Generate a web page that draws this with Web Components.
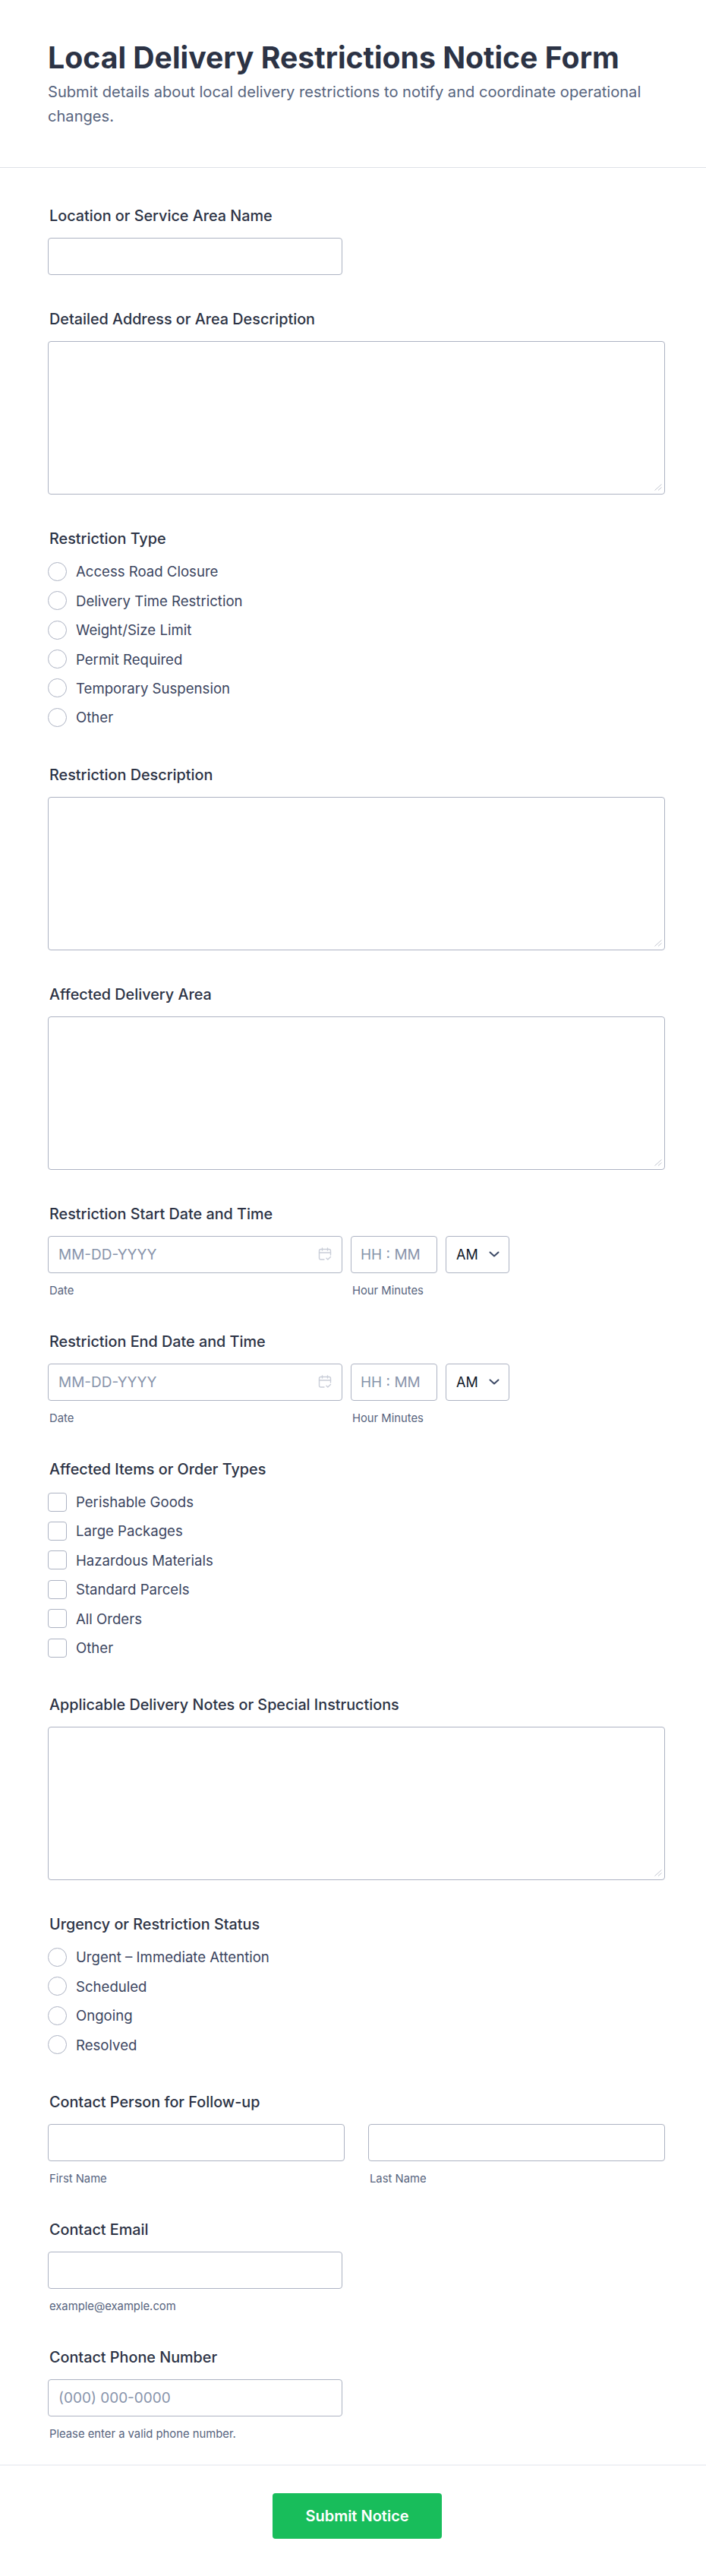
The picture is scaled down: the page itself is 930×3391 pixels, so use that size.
<!DOCTYPE html>
<html lang="en">
<head>
<meta charset="utf-8">
<title>Local Delivery Restrictions Notice Form</title>
<style>
  html, body { margin: 0; background: #fff; }
  body { font-family: Inter, "Liberation Sans", sans-serif; color: #2c3345; }
</style>
</head>
<body>

<delivery-form>
  <form-header slot="header" title="Local Delivery Restrictions Notice Form">
    Submit details about local delivery restrictions to notify and coordinate operational changes.
  </form-header>

  <form-field label="Location or Service Area Name"><text-box></text-box></form-field>
  <form-field label="Detailed Address or Area Description"><area-box></area-box></form-field>
  <form-field label="Restriction Type">
    <choice-list type="radio" items="Access Road Closure|Delivery Time Restriction|Weight/Size Limit|Permit Required|Temporary Suspension|Other"></choice-list>
  </form-field>
  <form-field label="Restriction Description"><area-box></area-box></form-field>
  <form-field label="Affected Delivery Area"><area-box></area-box></form-field>
  <form-field label="Restriction Start Date and Time"><date-time></date-time></form-field>
  <form-field label="Restriction End Date and Time"><date-time></date-time></form-field>
  <form-field label="Affected Items or Order Types">
    <choice-list type="checkbox" items="Perishable Goods|Large Packages|Hazardous Materials|Standard Parcels|All Orders|Other"></choice-list>
  </form-field>
  <form-field label="Applicable Delivery Notes or Special Instructions"><area-box></area-box></form-field>
  <form-field label="Urgency or Restriction Status">
    <choice-list type="radio" items="Urgent – Immediate Attention|Scheduled|Ongoing|Resolved"></choice-list>
  </form-field>
  <form-field label="Contact Person for Follow-up"><name-pair></name-pair></form-field>
  <form-field label="Contact Email"><text-box hint="example@example.com"></text-box></form-field>
  <form-field label="Contact Phone Number">
    <text-box placeholder="(000) 000-0000" hint="Please enter a valid phone number."></text-box>
  </form-field>

  <submit-bar slot="footer">Submit Notice</submit-bar>
</delivery-form>

<script>
const boxCss = `
  .box {
    box-sizing: border-box;
    height: 49.2px;
    display: flex;
    align-items: center;
    background: #fff;
    border: 1px solid #adb3c3;
    border-radius: 4px;
    font-size: 19px;
    color: #8894ab;
  }
  .hint {
    margin: 15px 0 0 2px;
    font-size: 14.800px;
    line-height: 17px;
    color: #57647e;
  }
`;

class DeliveryForm extends HTMLElement {
  constructor() {
    super();
    this.attachShadow({ mode: "open" });
    this.shadowRoot.innerHTML = `
      <style>
        :host { display: block; width: 930px; }
        .fields {
          display: flex;
          flex-direction: column;
          gap: 46px;
          padding: 51px 54px 30.500px 63px;
        }
      </style>
      <slot name="header"></slot>
      <div class="fields"><slot></slot></div>
      <slot name="footer"></slot>
    `;
  }
}

class FormHeader extends HTMLElement {
  constructor() {
    super();
    this.attachShadow({ mode: "open" });
    this.shadowRoot.innerHTML = `
      <style>
        :host {
          display: block;
          box-sizing: border-box;
          height: 221px;
          padding: 49px 50px 0 63px;
          border-bottom: 1px solid #dfe1e8;
        }
        h1 {
          margin: 0;
          font-size: 39.200px;
          line-height: 54px;
          font-weight: 700;
          color: #2c3345;
        }
        p {
          margin: 2px 0 0;
          font-size: 20.100px;
          line-height: 32px;
          color: #57647e;
        }
      </style>
      <h1></h1>
      <p><slot></slot></p>
    `;
    this.shadowRoot.querySelector("h1").textContent = this.getAttribute("title");
  }
}

class FormField extends HTMLElement {
  constructor() {
    super();
    this.attachShadow({ mode: "open" });
    this.shadowRoot.innerHTML = `
      <style>
        :host { display: block; }
        label {
          display: block;
          margin: 0 0 17px 2px;
          font-size: 19.800px;
          line-height: 24px;
          font-weight: 500;
          color: #2c3345;
        }
      </style>
      <label></label>
      <slot></slot>
    `;
    this.shadowRoot.querySelector("label").textContent = this.getAttribute("label");
  }
}

class TextBox extends HTMLElement {
  constructor() {
    super();
    this.attachShadow({ mode: "open" });
    const hint = this.getAttribute("hint");
    const placeholder = this.getAttribute("placeholder");
    this.shadowRoot.innerHTML = `
      <style>
        :host { display: block; }
        ${boxCss}
        .box { width: 388px; padding-left: 13px; }
      </style>
      <div class="box">${placeholder || ""}</div>
      ${hint ? `<div class="hint">${hint}</div>` : ""}
    `;
  }
}

class AreaBox extends HTMLElement {
  constructor() {
    super();
    this.attachShadow({ mode: "open" });
    this.shadowRoot.innerHTML = `
      <style>
        :host { display: block; position: relative; }
        textarea {
          display: block;
          box-sizing: border-box;
          width: 100%;
          height: 202px;
          margin: 0;
          padding: 8px;
          background: #fff;
          border: 1px solid #adb3c3;
          border-radius: 4px;
          outline: none;
          resize: none;
        }
        svg { position: absolute; right: 4px; bottom: 5px; }
      </style>
      <textarea aria-label="Description"></textarea>
      <svg width="10" height="9" viewBox="0 0 10 9" fill="none" stroke="#c3c6d0" stroke-width="1">
        <path d="M0.500 8.500L9.500 0.500M5 8.500L9.500 4.500"/>
      </svg>
    `;
  }
}

class ChoiceList extends HTMLElement {
  constructor() {
    super();
    this.attachShadow({ mode: "open" });
    const items = this.getAttribute("items").split("|");
    const round = this.getAttribute("type") === "radio";
    this.shadowRoot.innerHTML = `
      <style>
        :host { display: block; margin: -5px 0 -2px; }
        .row {
          display: flex;
          align-items: center;
          gap: 12px;
          height: 38.400px;
          font-size: 18.600px;
          color: #3b4560;
        }
        .mark {
          box-sizing: border-box;
          flex: none;
          width: 25px;
          height: 25px;
          background: #fff;
          border: 1px solid #adb3c3;
          border-radius: ${round ? "50%" : "4px"};
        }
      </style>
      ${items.map(t => `<div class="row"><span class="mark"></span><span>${t}</span></div>`).join("")}
    `;
  }
}

class DateTime extends HTMLElement {
  constructor() {
    super();
    this.attachShadow({ mode: "open" });
    this.shadowRoot.innerHTML = `
      <style>
        :host { display: block; }
        ${boxCss}
        .grid {
          display: grid;
          grid-template-columns: 388px 114px 84px;
          column-gap: 11px;
        }
        .date { padding: 0 13px; justify-content: space-between; }
        .time { padding-left: 12px; }
        .ampm { padding: 0 12px 0 13px; justify-content: space-between; color: #101828; font-size: 18px; }
        .hint { white-space: nowrap; }
      </style>
      <div class="grid">
        <div>
          <div class="box date">
            <span>MM-DD-YYYY</span>
            <svg width="18" height="18" viewBox="0 0 18 18" fill="none" stroke="#c9cdd8" stroke-width="1.4" stroke-linecap="round" stroke-linejoin="round">
              <path d="M8 16H3.500A2 2 0 0 1 1.500 14V4.500A2 2 0 0 1 3.500 2.500H14.500A2 2 0 0 1 16.500 4.500V10"/>
              <path d="M1.500 7H16.500M5.500 1V4M12.500 1V4"/>
              <path d="M11 14.200L12.800 16L16.500 12.500"/>
            </svg>
          </div>
          <div class="hint">Date</div>
        </div>
        <div>
          <div class="box time">HH : MM</div>
          <div class="hint">Hour Minutes</div>
        </div>
        <div class="box ampm">
          <span>AM</span>
          <svg width="14" height="8" viewBox="0 0 14 8" fill="none" stroke="#3d4a66" stroke-width="2" stroke-linecap="round" stroke-linejoin="round">
            <path d="M1.500 1.500L7 6.500L12.500 1.500"/>
          </svg>
        </div>
      </div>
    `;
  }
}

class NamePair extends HTMLElement {
  constructor() {
    super();
    this.attachShadow({ mode: "open" });
    this.shadowRoot.innerHTML = `
      <style>
        :host { display: block; }
        ${boxCss}
        .grid { display: grid; grid-template-columns: 1fr 1fr; column-gap: 31px; }
      </style>
      <div class="grid">
        <div><div class="box"></div><div class="hint">First Name</div></div>
        <div><div class="box"></div><div class="hint">Last Name</div></div>
      </div>
    `;
  }
}

class SubmitBar extends HTMLElement {
  constructor() {
    super();
    this.attachShadow({ mode: "open" });
    this.shadowRoot.innerHTML = `
      <style>
        :host {
          display: flex;
          justify-content: center;
          box-sizing: border-box;
          height: 146px;
          padding: 36px 0 0 11px;
          border-top: 2px solid #f0f1f5;
        }
        button {
          width: 223px;
          height: 60px;
          background: #18bd5b;
          border: 0;
          border-radius: 4px;
          font: 600 20px Inter, "Liberation Sans", sans-serif;
          color: #fff;
        }
      </style>
      <button type="button"><slot></slot></button>
    `;
  }
}

customElements.define("delivery-form", DeliveryForm);
customElements.define("form-header", FormHeader);
customElements.define("form-field", FormField);
customElements.define("text-box", TextBox);
customElements.define("area-box", AreaBox);
customElements.define("choice-list", ChoiceList);
customElements.define("date-time", DateTime);
customElements.define("name-pair", NamePair);
customElements.define("submit-bar", SubmitBar);
</script>
</body>
</html>
